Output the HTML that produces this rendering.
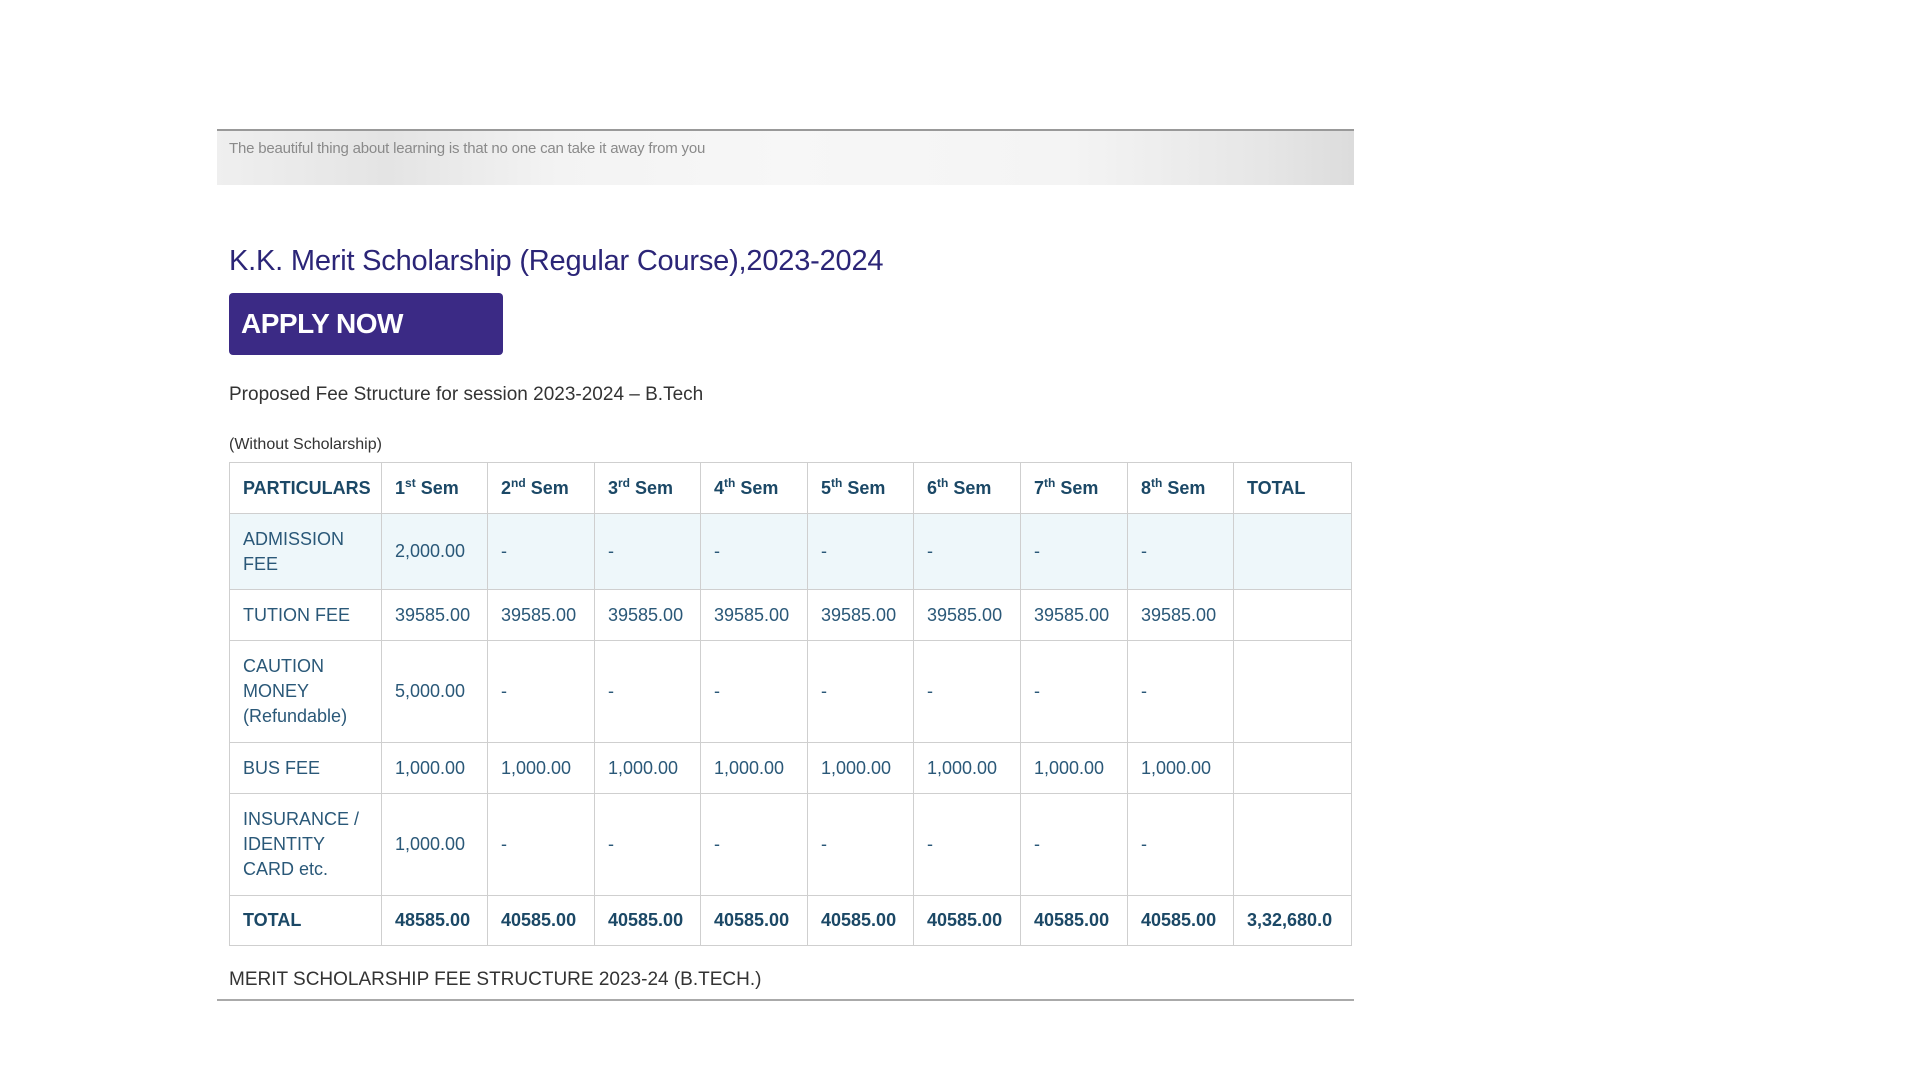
<!DOCTYPE html>
<html><head><meta charset="utf-8"><style>
html,body{margin:0;padding:0;background:#fff;width:1920px;height:1080px;overflow:hidden;font-family:"Liberation Sans",sans-serif;}
.band{position:absolute;left:217px;top:129px;width:1137px;height:56px;border-top:2px solid #999;box-sizing:border-box;
background:linear-gradient(90deg,#efefef 0%,#e4e4e4 15%,#f3f3f3 30%,#f7f7f7 50%,#f4f4f4 75%,#e6e6e6 92%,#dcdcdc 100%);}
.quote{position:absolute;left:229px;top:140px;font-size:15px;color:#8a8a8a;letter-spacing:-0.2px}
h1{position:absolute;left:229px;top:245px;margin:0;font-size:29px;font-weight:normal;color:#2b2577;letter-spacing:-0.2px}
.btn{position:absolute;left:229px;top:293px;width:274px;height:62px;background:#3b2a85;border-radius:4px;color:#fff;font-size:28px;font-weight:bold;line-height:62px;padding-left:12px;box-sizing:border-box;letter-spacing:-0.5px}
.p1{position:absolute;left:229px;top:384px;font-size:19px;color:#333}
.p2{position:absolute;left:229px;top:436px;font-size:16px;color:#333}
table{position:absolute;left:229px;top:462px;border-collapse:collapse;width:1122px;font-size:18px;color:#2a5878;table-layout:fixed}
td,th{border:1.5px solid #cfcfcf;padding:0 0 0 13px;text-align:left;line-height:25px;vertical-align:middle;white-space:nowrap;overflow:hidden}
th{font-weight:bold;color:#1b4866}
sup{font-size:12px;line-height:0}
tr.b td{font-weight:bold;color:#1b4866}
.foot{position:absolute;left:229px;top:969px;font-size:19px;color:#333}
.line{position:absolute;left:217px;top:999px;width:1137px;height:2px;background:#aaa}
</style></head><body>
<div class="band"></div>
<div class="quote">The beautiful thing about learning is that no one can take it away from you</div>
<h1>K.K. Merit Scholarship (Regular Course),2023-2024</h1>
<div class="btn">APPLY NOW</div>
<div class="p1">Proposed Fee Structure for session 2023-2024 – B.Tech</div>
<div class="p2">(Without Scholarship)</div>
<table>
<colgroup><col style="width:152px"><col style="width:106px"><col style="width:107px"><col style="width:106px"><col style="width:107px"><col style="width:106px"><col style="width:107px"><col style="width:107px"><col style="width:106px"><col style="width:118px"></colgroup>
<tr style="height:51px"><th>PARTICULARS</th><th>1<sup>st</sup> Sem</th><th>2<sup>nd</sup> Sem</th><th>3<sup>rd</sup> Sem</th><th>4<sup>th</sup> Sem</th><th>5<sup>th</sup> Sem</th><th>6<sup>th</sup> Sem</th><th>7<sup>th</sup> Sem</th><th>8<sup>th</sup> Sem</th><th>TOTAL</th></tr>
<tr style="height:76px;background:#eef7fa"><td>ADMISSION<br>FEE</td><td>2,000.00</td><td>-</td><td>-</td><td>-</td><td>-</td><td>-</td><td>-</td><td>-</td><td></td></tr>
<tr style="height:51px"><td>TUTION FEE</td><td>39585.00</td><td>39585.00</td><td>39585.00</td><td>39585.00</td><td>39585.00</td><td>39585.00</td><td>39585.00</td><td>39585.00</td><td></td></tr>
<tr style="height:102px"><td>CAUTION<br>MONEY<br>(Refundable)</td><td>5,000.00</td><td>-</td><td>-</td><td>-</td><td>-</td><td>-</td><td>-</td><td>-</td><td></td></tr>
<tr style="height:51px"><td>BUS FEE</td><td>1,000.00</td><td>1,000.00</td><td>1,000.00</td><td>1,000.00</td><td>1,000.00</td><td>1,000.00</td><td>1,000.00</td><td>1,000.00</td><td></td></tr>
<tr style="height:102px"><td>INSURANCE /<br>IDENTITY<br>CARD etc.</td><td>1,000.00</td><td>-</td><td>-</td><td>-</td><td>-</td><td>-</td><td>-</td><td>-</td><td></td></tr>
<tr class="b" style="height:50px"><td>TOTAL</td><td>48585.00</td><td>40585.00</td><td>40585.00</td><td>40585.00</td><td>40585.00</td><td>40585.00</td><td>40585.00</td><td>40585.00</td><td>3,32,680.0</td></tr>
</table>
<div class="foot">MERIT SCHOLARSHIP FEE STRUCTURE 2023-24 (B.TECH.)</div>
<div class="line"></div>
</body></html>
